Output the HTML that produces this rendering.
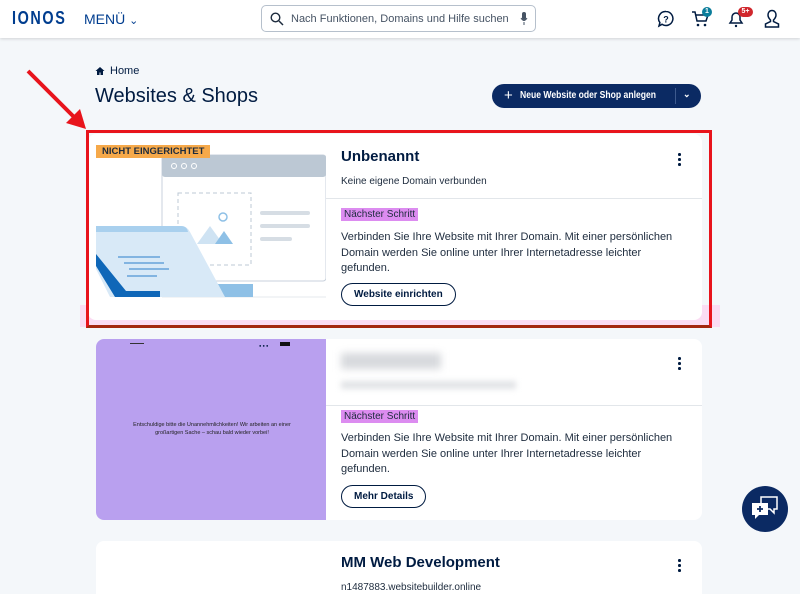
<!DOCTYPE html>
<html><head><meta charset="utf-8"><style>
*{box-sizing:border-box;margin:0;padding:0}
html,body{width:800px;height:594px;overflow:hidden}
body{background:#f4f7fa;font-family:"Liberation Sans",sans-serif;color:#001b41;position:relative}
.hdr{position:absolute;left:0;top:0;width:800px;height:38px;background:#fff;box-shadow:0 1px 3px rgba(0,0,0,.15)}
.abs{position:absolute}
.card{position:absolute;background:#fff;border-radius:8px;overflow:hidden}
.t{font-size:15px;font-weight:bold;color:#001b41}
.s{font-size:10px;color:#1d2b3d}
.tag{position:absolute;background:#dc8cf0;font-size:10px;padding:1px 3px;color:#1d2b3d}
.p{position:absolute;font-size:11px;line-height:15.5px;color:#1d2b3d;width:345px}
.btn{position:absolute;border:1.5px solid #001b41;border-radius:12px;font-size:10px;font-weight:bold;padding:5px 12px;color:#001b41}
.dots{position:absolute;width:4px}
.dots i{display:block;width:2.5px;height:2.5px;background:#001b41;border-radius:50%;margin-bottom:2.5px}
.div{position:absolute;height:1px;background:#e2e6ea}
</style></head><body>
<div class="hdr">
 <div class="abs" style="left:12px;top:8px;font-size:18px;letter-spacing:2px;color:#003d8f;font-weight:bold;transform:scaleX(.8);transform-origin:left">IONOS</div>
 <div class="abs" style="left:84px;top:11px;font-size:14px;color:#003d8f;">MENÜ <span style="font-size:11px">&#8964;</span></div>
 <div class="abs" style="left:261px;top:5px;width:275px;height:27px;border:1px solid #b6c0cc;border-radius:5px;background:#fff">
  <svg class="abs" style="left:8px;top:6px" width="14" height="14" viewBox="0 0 14 14"><circle cx="5.5" cy="5.5" r="4.3" fill="none" stroke="#1d2b3d" stroke-width="1.4"/><path d="M9 9l4 4" stroke="#1d2b3d" stroke-width="1.5"/></svg>
  <div class="abs" style="left:29px;top:7px;font-size:11px;color:#465364">Nach Funktionen, Domains und Hilfe suchen</div>
  <svg class="abs" style="left:258px;top:6px" width="8" height="14" viewBox="0 0 8 14"><rect x="2" y="0" width="4" height="8" rx="2" fill="#465364"/><path d="M1 6q3 5 6 0M4 10v3" stroke="#465364" fill="none"/></svg>
 </div>
 <svg class="abs" style="left:657px;top:10px" width="18" height="18" viewBox="0 0 18 18"><path d="M9 1.5a7 7 0 1 1-4 12.8L2 16l.9-3.4A7 7 0 0 1 9 1.5z" fill="none" stroke="#001b41" stroke-width="1.5"/><text x="9" y="12.5" font-size="9" font-weight="bold" text-anchor="middle" fill="#001b41" font-family="Liberation Sans">?</text></svg>
 <svg class="abs" style="left:691px;top:10px" width="18" height="18" viewBox="0 0 18 18"><path d="M1 2h3l2 9h9l2-6H5" fill="none" stroke="#001b41" stroke-width="1.5"/><circle cx="7" cy="15" r="1.3" fill="#001b41"/><circle cx="14" cy="15" r="1.3" fill="#001b41"/></svg>
 <div class="abs" style="left:702px;top:7px;width:10px;height:10px;border-radius:50%;background:#0b7d9b;color:#fff;font-size:7px;text-align:center;line-height:10px;font-weight:bold">1</div>
 <svg class="abs" style="left:727px;top:10px" width="18" height="18" viewBox="0 0 18 18"><path d="M3 13h12l-2-3V7a4 4 0 0 0-8 0v3z" fill="none" stroke="#001b41" stroke-width="1.5"/><circle cx="9" cy="16" r="1.2" fill="#001b41"/></svg>
 <div class="abs" style="left:738px;top:7px;width:15px;height:10px;border-radius:5px;background:#d0272d;color:#fff;font-size:7px;text-align:center;line-height:10px;font-weight:bold">5+</div>
 <svg class="abs" style="left:763px;top:9px" width="18" height="20" viewBox="0 0 18 20"><path d="M9 1.5c2.5 0 4 2 4 4.5s-1.5 4-2.5 5v1.5l5 2.5v3H2.5v-3l5-2.5V11C6.5 10 5 8.5 5 6s1.5-4.5 4-4.5z" fill="none" stroke="#001b41" stroke-width="1.5"/></svg>
</div>
<svg class="abs" style="left:95px;top:66px" width="10" height="10" viewBox="0 0 10 10"><path d="M5 1L0.5 5H2v4h2.5V6.5h1V9H8V5h1.5z" fill="#001b41"/></svg>
<div class="abs" style="left:110px;top:65px;font-size:11px">Home</div>
<div class="abs" style="left:95px;top:85px;font-size:20px">Websites &amp; Shops</div>
<div class="abs" style="left:492px;top:84px;width:209px;height:24px;background:#0b2a63;border-radius:12px;color:#fff;font-size:10px;font-weight:bold">
 <span class="abs" style="left:12px;top:3px;font-size:15px;font-weight:normal">+</span><span class="abs" style="left:28px;top:6px;white-space:nowrap;transform:scaleX(.86);transform-origin:left">Neue Website oder Shop anlegen</span>
 <div class="abs" style="left:183px;top:4px;width:1px;height:16px;background:#3d5a8e"></div>
 <span class="abs" style="left:191px;top:5px;font-size:9px">&#8964;</span>
</div>
<svg class="abs" style="left:20px;top:65px" width="75" height="70" viewBox="0 0 75 70"><path d="M8 6L58 56" stroke="#e8141c" stroke-width="4"/><path d="M66 64L46 58L60 44z" fill="#e8141c"/></svg>
<div class="abs" style="left:80px;top:305px;width:640px;height:22px;background:#fbdcf3"></div>
<div class="card" style="left:88px;top:134px;width:614px;height:186px">
 <svg class="abs" style="left:0;top:0" width="238" height="186" viewBox="0 0 238 186">
  <rect x="74" y="21" width="164" height="126" rx="3" fill="#fff" stroke="#c9d2dc"/>
  <rect x="74" y="21" width="164" height="22" rx="3" fill="#bcc8d4"/>
  <circle cx="86" cy="32" r="2.5" fill="none" stroke="#fff"/><circle cx="96" cy="32" r="2.5" fill="none" stroke="#fff"/><circle cx="106" cy="32" r="2.5" fill="none" stroke="#fff"/>
  <rect x="90" y="59" width="73" height="72" fill="none" stroke="#bcc8d4" stroke-dasharray="4 3"/>
  <circle cx="135" cy="83" r="4" fill="none" stroke="#8ec0e6" stroke-width="1.5"/>
  <path d="M109 110l13-18 13 18z" fill="#cfe3f3"/><path d="M127 110l9-13 9 13z" fill="#8ec0e6"/>
  <rect x="172" y="77" width="50" height="4" rx="2" fill="#d6dde4"/><rect x="172" y="90" width="50" height="4" rx="2" fill="#d6dde4"/><rect x="172" y="103" width="32" height="4" rx="2" fill="#d6dde4"/>
  <line x1="74" y1="163" x2="238" y2="163" stroke="#e4e9ee"/>
  <path d="M58 163h107v-13H55z" fill="#8ec0e6"/>
  <path d="M8 92h85q6 0 9 6l35 65H22L8 135z" fill="#d8e9f7"/>
  <path d="M8 92h85q6 0 7 6H8z" fill="#a9d0ee"/>
  <path d="M8 120L8 132L27 163L72 163L72 157L38 157z" fill="#0f67b8"/>
  <path d="M30 123h42M36 129h40M41 135h40M39 142h30" stroke="#4f94d4" stroke-width="1.2"/>
 </svg>
 <div class="abs" style="left:8px;top:11px;background:#f6a94a;font-size:9.5px;font-weight:bold;padding:1px 6px;color:#1d2b3d">NICHT EINGERICHTET</div>
 <div class="abs t" style="left:253px;top:14px">Unbenannt</div>
 <div class="abs s" style="left:253px;top:42px">Keine eigene Domain verbunden</div>
 <div class="dots" style="left:590px;top:19px"><i></i><i></i><i></i></div>
 <div class="div" style="left:238px;top:64px;width:376px"></div>
 <div class="tag" style="left:253px;top:74px">Nächster Schritt</div>
 <div class="p" style="left:253px;top:96px">Verbinden Sie Ihre Website mit Ihrer Domain. Mit einer persönlichen Domain werden Sie online unter Ihrer Internetadresse leichter gefunden.</div>
 <div class="btn" style="left:253px;top:149px">Website einrichten</div>
</div>
<div class="abs" style="left:86px;top:130px;width:626px;height:198px;border:3px solid #e8141c;border-bottom-color:#a3290f"></div>
<div class="card" style="left:96px;top:339px;width:606px;height:181px">
 <div class="abs" style="left:0;top:0;width:230px;height:181px;background:#b9a0ef">
  <div class="abs" style="left:34px;top:4px;width:14px;height:1px;background:#333"></div>
  <div class="abs" style="left:163px;top:4px;font-size:4px">● ● ●</div>
  <div class="abs" style="left:184px;top:3px;width:10px;height:4px;background:#111"></div>
  <div class="abs" style="left:30px;top:82px;width:172px;font-size:5.5px;text-align:center;color:#222;line-height:8px">Entschuldige bitte die Unannehmlichkeiten! Wir arbeiten an einer großartigen Sache – schau bald wieder vorbei!</div>
 </div>
 <div class="abs" style="left:245px;top:14px;width:100px;height:16px;background:#d7d9dd;filter:blur(4px)"></div>
 <div class="abs" style="left:245px;top:42px;width:175px;height:8px;background:#e1e3e6;filter:blur(3px)"></div>
 <div class="dots" style="left:582px;top:18px"><i></i><i></i><i></i></div>
 <div class="div" style="left:230px;top:66px;width:376px"></div>
 <div class="tag" style="left:245px;top:71px">Nächster Schritt</div>
 <div class="p" style="left:245px;top:92px">Verbinden Sie Ihre Website mit Ihrer Domain. Mit einer persönlichen Domain werden Sie online unter Ihrer Internetadresse leichter gefunden.</div>
 <div class="btn" style="left:245px;top:146px">Mehr Details</div>
</div>
<div class="card" style="left:96px;top:541px;width:606px;height:70px">
 <div class="abs t" style="left:245px;top:13px">MM Web Development</div>
 <div class="abs s" style="left:245px;top:41px">n1487883.websitebuilder.online</div>
 <div class="dots" style="left:582px;top:18px"><i></i><i></i><i></i></div>
</div>
<div class="abs" style="left:742px;top:486px;width:46px;height:46px;border-radius:50%;background:#0b2a63"></div>
<svg class="abs" style="left:749px;top:494px" width="32" height="30" viewBox="0 0 32 30"><path d="M12 3h16v12h-3v4l-4-4h-9z" fill="#0b2a63" stroke="#fff" stroke-width="1.5"/><path d="M3 9h16v12H10l-4 4v-4H3z" fill="#fff"/><path d="M11 12v6M8 15h6" stroke="#0b2a63" stroke-width="1.8"/></svg>
</body></html>
